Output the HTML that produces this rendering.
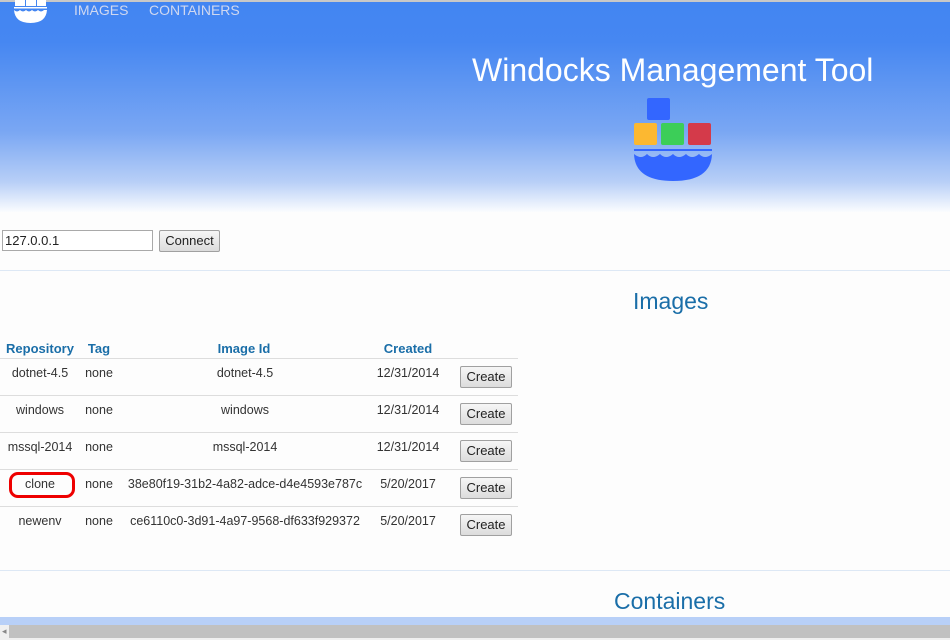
<!DOCTYPE html>
<html><head><style>
body{margin:0;width:950px;height:640px;overflow:hidden;background:#fdfdfd;font-family:"Liberation Sans",Arial,sans-serif;position:relative}
.hdr{position:absolute;left:0;top:0;width:950px;height:212px;background:linear-gradient(#4285f2 0px,#4687f2 40px,#7aa7f3 130px,#b8cff7 180px,#fff 212px);border-top:2px solid #c8c8c8;box-sizing:border-box}
.nav{position:absolute;top:2px;color:#d0d8f0;font-size:14px}
.t{position:absolute;left:472px;top:52px;color:#fff;font-size:32px}
.ab{position:absolute;white-space:nowrap}
input{position:absolute;left:2px;top:230px;width:151px;height:21px;box-sizing:border-box;border:1px solid #a9a9a9;font:13px "Liberation Sans",sans-serif;padding:1px 2px;color:#222}
.btn{position:absolute;box-sizing:border-box;border:1px solid #a0a0a0;border-radius:2px;background:linear-gradient(#f6f6f6,#dcdcdc);font-size:13px;color:#222;text-align:center;line-height:20px;height:22px}
.hr{position:absolute;left:0;width:950px;height:1px;background:#dde8f5}
.rl{position:absolute;left:0;width:518px;height:1px;background:#ddd}
.th{position:absolute;top:341px;color:#1a6ea8;font-weight:bold;font-size:13px;transform:translateX(-50%)}
.td{position:absolute;color:#333;font-size:12.5px;transform:translateX(-50%) translateY(-1px);white-space:nowrap}
h2{position:absolute;margin:0;font-weight:normal;color:#1a6ea8;font-size:23px}
</style></head><body>
<div class="hdr"></div>
<svg class="ab" style="left:13px;top:0" width="35" height="25" viewBox="0 0 35 25"><rect x="2" y="0" width="31" height="6" fill="#fff"/><rect x="12" y="0" width="1" height="6" fill="#4285f2"/><rect x="23" y="0" width="1" height="6" fill="#4285f2"/><rect x="1" y="7" width="33" height="1.5" fill="#fff"/><path d="M1 10 Q4 13 7 10 Q10 13 13 10 Q16 13 19 10 Q22 13 25 10 Q28 13 31 10 L34 10 Q33 23 17.5 23 Q2 23 1 10Z" fill="#fff"/></svg>
<div class="nav" style="left:74px">IMAGES</div>
<div class="nav" style="left:149px">CONTAINERS</div>
<div class="t">Windocks Management Tool</div>
<svg class="ab" style="left:633px;top:97px" width="80" height="85" viewBox="0 0 80 85">
<rect x="14" y="1" width="23" height="22" rx="2" fill="#3366ff"/>
<rect x="1" y="26" width="23" height="22" rx="2" fill="#fcb831"/>
<rect x="28" y="26" width="23" height="22" rx="2" fill="#3cce58"/>
<rect x="55" y="26" width="23" height="22" rx="2" fill="#d43a4a"/>
<rect x="1" y="52" width="78" height="2" fill="#3366ff"/>
<path d="M1 57 Q8 63 14 57 Q20 63 27 57 Q33 63 40 57 Q46 63 53 57 Q59 63 66 57 Q72 63 79 57 Q78 84 40 84 Q2 84 1 57Z" fill="#3366ff"/>
</svg>
<input value="127.0.0.1">
<div class="btn" style="left:159px;top:230px;width:61px">Connect</div>
<div class="hr" style="top:270px"></div>
<h2 style="left:633px;top:288px">Images</h2>
<div class="th" style="left:40px">Repository</div>
<div class="th" style="left:99px">Tag</div>
<div class="th" style="left:244px">Image Id</div>
<div class="th" style="left:408px">Created</div>
<div class="rl" style="top:358px"></div>
<div class="rl" style="top:395px"></div>
<div class="rl" style="top:432px"></div>
<div class="rl" style="top:469px"></div>
<div class="rl" style="top:506px"></div>

<div class="td" style="left:40px;top:367px">dotnet-4.5</div><div class="td" style="left:99px;top:367px">none</div><div class="td" style="left:245px;top:367px">dotnet-4.5</div><div class="td" style="left:408px;top:367px">12/31/2014</div><div class="btn" style="left:460px;top:366px;width:52px">Create</div>
<div class="td" style="left:40px;top:404px">windows</div><div class="td" style="left:99px;top:404px">none</div><div class="td" style="left:245px;top:404px">windows</div><div class="td" style="left:408px;top:404px">12/31/2014</div><div class="btn" style="left:460px;top:403px;width:52px">Create</div>
<div class="td" style="left:40px;top:441px">mssql-2014</div><div class="td" style="left:99px;top:441px">none</div><div class="td" style="left:245px;top:441px">mssql-2014</div><div class="td" style="left:408px;top:441px">12/31/2014</div><div class="btn" style="left:460px;top:440px;width:52px">Create</div>
<div class="td" style="left:40px;top:478px">clone</div><div class="td" style="left:99px;top:478px">none</div><div class="td" style="left:245px;top:478px">38e80f19-31b2-4a82-adce-d4e4593e787c</div><div class="td" style="left:408px;top:478px">5/20/2017</div><div class="btn" style="left:460px;top:477px;width:52px">Create</div>
<div class="ab" style="left:9px;top:472px;width:66px;height:26px;border:3px solid #e00;border-radius:9px;box-sizing:border-box"></div>
<div class="td" style="left:40px;top:515px">newenv</div><div class="td" style="left:99px;top:515px">none</div><div class="td" style="left:245px;top:515px">ce6110c0-3d91-4a97-9568-df633f929372</div><div class="td" style="left:408px;top:515px">5/20/2017</div><div class="btn" style="left:460px;top:514px;width:52px">Create</div>

<div class="hr" style="top:570px"></div>
<h2 style="left:614px;top:588px">Containers</h2>
<div class="ab" style="left:0;top:617px;width:950px;height:8px;background:#b8d0f8"></div>
<div class="ab" style="left:0;top:625px;width:950px;height:15px;background:#f0f0f0"></div>
<div class="ab" style="left:9px;top:625px;width:941px;height:13px;background:#c1c1c1"></div>
<div class="ab" style="left:2px;top:626px;color:#888;font-size:9px">◂</div>
</body></html>
